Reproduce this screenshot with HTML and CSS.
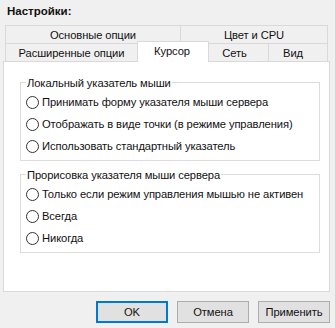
FILE: index.html
```html
<!DOCTYPE html>
<html>
<head>
<meta charset="utf-8">
<link rel="stylesheet" href="styles.css">
</head>
<body>
<div class="title">Настройки:</div>
<div class="tabs">
  <div class="tab-row">
    <div class="tab t-basic">Основные опции</div>
    <div class="tab t-color">Цвет и CPU</div>
  </div>
  <div class="tab-row row2">
    <div class="tab t-adv">Расширенные опции</div>
    <div class="tab t-cursor active">Курсор</div>
    <div class="tab t-net">Сеть</div>
    <div class="tab t-view">Вид</div>
  </div>
</div>
<div class="panel">
  <fieldset class="group first">
    <legend>Локальный указатель мыши</legend>
    <label class="radio"><span class="circle"></span>Принимать форму указателя мыши сервера</label>
    <label class="radio"><span class="circle"></span>Отображать в виде точки (в режиме управления)</label>
    <label class="radio"><span class="circle"></span>Использовать стандартный указатель</label>
  </fieldset>
  <fieldset class="group second">
    <legend>Прорисовка указателя мыши сервера</legend>
    <label class="radio"><span class="circle"></span>Только если режим управления мышью не активен</label>
    <label class="radio"><span class="circle"></span>Всегда</label>
    <label class="radio"><span class="circle"></span>Никогда</label>
  </fieldset>
</div>
<div class="buttons">
  <div class="btn default">OK</div>
  <div class="btn">Отмена</div>
  <div class="btn">Применить</div>
</div>
</body>
</html>
```
FILE: styles.css
```css
html, body {
  margin: 0;
  padding: 0;
  background: #f0f0f0;
}
body {
  font-family: "Liberation Sans", Arial, sans-serif;
  font-size: 11.2px;
  letter-spacing: -0.1px;
  color: #111;
  width: 335px;
  height: 328px;
  overflow: hidden;
}
.title {
  box-sizing: border-box;
  height: 25px;
  padding: 4px 0 0 7px;
  line-height: 14px;
  font-weight: bold;
  font-size: 11.5px;
  letter-spacing: 0;
}
.tabs {
  margin-left: 5px;
  width: 323px;
}
.tab-row {
  display: flex;
  height: 18px;
}
.row2 {
  align-items: flex-end;
}
.tab {
  box-sizing: border-box;
  height: 18px;
  border-top: 1px solid #d9d9d9;
  border-left: 1px solid #d9d9d9;
  line-height: 18px;
  text-align: center;
  white-space: nowrap;
  background: #f0f0f0;
}
.t-basic { width: 175px; }
.t-color { width: 148px; border-right: 1px solid #d9d9d9; }
.t-adv { width: 132px; }
.t-cursor { width: 72px; padding-right: 2px; }
.t-net { width: 59px; border-left: none; padding-right: 8px; }
.t-view { width: 60px; border-right: 1px solid #d9d9d9; padding-right: 10px; }
.tab.active {
  height: 21px;
  margin-top: -2px;
  margin-bottom: -1px;
  border-right: 1px solid #d9d9d9;
  background: #fff;
  line-height: 18px;
  position: relative;
  z-index: 1;
}
.panel {
  box-sizing: border-box;
  margin-left: 3px;
  width: 327px;
  height: 231px;
  border: 1px solid #d9d9d9;
  background: #fff;
  padding-top: 11px;
  padding-left: 16px;
}
.group {
  box-sizing: border-box;
  width: 300px;
  margin: 0;
  border: 1px solid #dcdcdc;
  padding: 0 0 3px 5px;
}
.group.second {
  margin-top: 4px;
}
.group legend {
  padding: 3px 1px 0;
  line-height: 15px;
}
.radio {
  display: flex;
  align-items: center;
  height: 22px;
  white-space: nowrap;
}
.circle {
  box-sizing: border-box;
  width: 13px;
  height: 13px;
  border: 1px solid #333;
  border-radius: 50%;
  background: #fff;
  margin-right: 3px;
  flex: none;
}
.buttons {
  display: flex;
  justify-content: flex-end;
  gap: 9px;
  margin-top: 9px;
  padding-right: 5px;
}
.btn {
  box-sizing: border-box;
  width: 72px;
  height: 22px;
  border: 1px solid #adadad;
  background: #e1e1e1;
  display: flex;
  align-items: center;
  justify-content: center;
}
.btn.default {
  border: 2px solid #0078d7;
}
```
